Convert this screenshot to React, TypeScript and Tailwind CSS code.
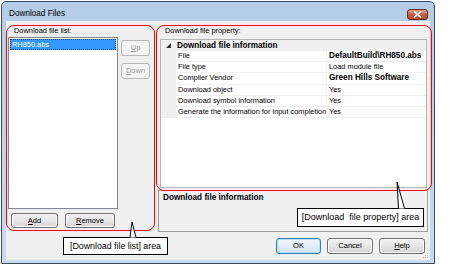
import React from "react";

const rows = [
  { name: "File", value: "DefaultBuild\\RH850.abs", bold: true },
  { name: "File type", value: "Load module file", bold: false },
  { name: "Compiler Vendor", value: "Green Hills Software", bold: true },
  { name: "Download object", value: "Yes", bold: false },
  { name: "Download symbol information", value: "Yes", bold: false },
  { name: "Generate the information for input completion", value: "Yes", bold: false },
];

type BtnProps = {
  children: React.ReactNode;
  className?: string;
  disabled?: boolean;
  primary?: boolean;
};

const Btn = ({ children, className = "", disabled, primary }: BtnProps) => {
  let look =
    "border-[#707070] bg-gradient-to-b from-[#f2f2f2] via-[#e6e6e6] to-[#d4d4d4] text-black shadow-[inset_0_0_0_1px_#fbfbfb]";
  if (disabled) look = "border-[#b6b9bc] bg-[#f4f4f4] text-[#9a9a9a]";
  if (primary)
    look =
      "border-[#3c7fb1] bg-gradient-to-b from-[#eef6fb] via-[#e3eef7] to-[#cfe2f0] text-black shadow-[inset_0_0_0_1px_#aee0fb]";
  return (
    <div
      className={`flex items-center justify-center rounded-[3px] border text-[7.5px] leading-none ${look} ${className}`}
    >
      {children}
    </div>
  );
};

const App = () => {
  return (
    <div className="relative w-[474px] h-[280px] overflow-hidden bg-white font-['Liberation_Sans',Arial,sans-serif] text-black">
      {/* dialog window */}
      <div className="ml-[1px] mt-[1px] w-[434px] h-[263px] flex flex-col rounded-t-[5px] border border-[#3d4d61] bg-gradient-to-b from-[#b4cde8] to-[#c9daee]">
        <div className="h-[19px] flex items-start justify-between pl-[7px] pr-[6px]">
          <span className="pt-[6px] text-[8.2px] leading-[11px]">Download Files</span>
          <div className="mt-[7px] w-[21px] h-[11px] rounded-[3px] border border-[#6b2a1e] bg-gradient-to-b from-[#e6a391] via-[#c7604a] to-[#b34a33] flex items-center justify-center">
            <svg width="9" height="7" viewBox="0 0 9 7">
              <path d="M1 0.5 L8 6.5 M8 0.5 L1 6.5" stroke="#fff" strokeWidth="1.6" />
            </svg>
          </div>
        </div>

        {/* client area */}
        <div className="mx-[4px] h-[239px] bg-[#f0f0f0] flex flex-col pt-[5px] relative">
          <div className="flex h-[206px]">
            {/* left column */}
            <div className="w-[152px] flex flex-col">
              <div className="pl-[8px] h-[10px] text-[7.4px] leading-[10px]">Download file list:</div>
              <div className="flex mt-[1px]">
                <div className="ml-[2px] w-[110px] h-[172px] bg-white border border-[#828790] p-[1px]">
                  <div className="h-[11px] bg-[#3399ff] outline outline-1 outline-dotted outline-[#0b3a6b] -outline-offset-1 text-white text-[7.4px] leading-[11px] pl-[2px]">
                    RH850.abs
                  </div>
                </div>
                <div className="ml-[3px] w-[29px] flex flex-col gap-[7px] pt-[3px]">
                  <Btn disabled className="h-[16px]">
                    <span className="underline">U</span>p
                  </Btn>
                  <Btn disabled className="h-[16px]">
                    <span className="underline">D</span>own
                  </Btn>
                </div>
              </div>
              <div className="flex gap-[7px] ml-[5px] mt-[4px]">
                <Btn className="w-[47px] h-[15px]">
                  <span className="underline">A</span>dd
                </Btn>
                <Btn className="w-[50px] h-[15px]">
                  <span className="underline">R</span>emove
                </Btn>
              </div>
            </div>

            {/* right column */}
            <div className="w-[270px] flex flex-col">
              <div className="pl-[7px] h-[10px] text-[7.4px] leading-[10px]">Download file property:</div>
              <div className="mt-[3px] ml-[2px] w-[267px] h-[150px] bg-white border border-[#b4b4b4] flex flex-col">
                <div className="h-[11px] bg-[#f0f0f0] flex items-center">
                  <svg width="16" height="11" viewBox="0 0 16 11" className="shrink-0">
                    <path d="M10 3 L10 8 L5 8 Z" fill="#333" />
                  </svg>
                  <span className="text-[8.2px] font-bold leading-[11px]">Download file information</span>
                </div>
                {rows.map((r) => (
                  <div key={r.name} className="h-[11.2px] flex">
                    <div className="w-[15px] bg-[#f0f0f0] shrink-0" />
                    <div className="w-[151px] shrink-0 border-b border-r border-[#f0f0f0] pl-[2px] text-[7.4px] leading-[10px] whitespace-nowrap overflow-hidden">
                      {r.name}
                    </div>
                    <div
                      className={`flex-1 border-b border-[#f0f0f0] pl-[2px] whitespace-nowrap overflow-hidden leading-[10px] ${
                        r.bold ? "text-[8.2px] font-bold" : "text-[7.4px]"
                      }`}
                    >
                      {r.value}
                    </div>
                  </div>
                ))}
              </div>
              <div className="mt-[2px] w-[270px] h-[42px] border border-[#a0a0a0] bg-[#f0f0f0] pl-[4px] pt-[2px] text-[8.2px] font-bold leading-[10px]">
                Download file information
              </div>
            </div>
          </div>

          {/* bottom buttons */}
          <div className="flex justify-end gap-[6px] pr-[5px] mt-[6px]">
            <Btn primary className="w-[45px] h-[16px]">OK</Btn>
            <Btn className="w-[46px] h-[16px]">Cancel</Btn>
            <Btn className="w-[46px] h-[16px]">
              <span className="underline">H</span>elp
            </Btn>
          </div>

          {/* resize grip */}
          <svg width="7" height="7" viewBox="0 0 7 7" className="absolute right-[1px] bottom-[1px]">
            <rect x="5" y="1" width="1" height="1" fill="#b8b8b8" />
            <rect x="3" y="3" width="1" height="1" fill="#b8b8b8" />
            <rect x="5" y="3" width="1" height="1" fill="#b8b8b8" />
            <rect x="1" y="5" width="1" height="1" fill="#b8b8b8" />
            <rect x="3" y="5" width="1" height="1" fill="#b8b8b8" />
            <rect x="5" y="5" width="1" height="1" fill="#b8b8b8" />
          </svg>
        </div>
      </div>

      {/* annotation: red outlines */}
      <div className="absolute left-[6px] top-[25px] w-[149px] h-[206px] rounded-[8px] border border-[#ff0000]" />
      <div className="absolute left-[156px] top-[25px] w-[276px] h-[166px] rounded-[8px] border border-[#ff0000]" />

      {/* callout: file list */}
      <div className="absolute left-[63px] top-[237px] w-[105px] h-[18px] bg-white border border-black flex items-center justify-center text-[8.8px] leading-none whitespace-nowrap">
        [Download file list] area
      </div>
      <svg width="12" height="18" viewBox="0 0 12 18" className="absolute left-[126px] top-[221px]">
        <polygon points="6,1 4,16.5 10,16.5" fill="#fff" />
        <polyline points="4,16.5 6,1 10,16.5" fill="none" stroke="#000" strokeWidth="1" />
      </svg>

      {/* callout: file property */}
      <div className="absolute left-[297px] top-[208px] w-[127px] h-[19px] bg-white border border-black flex items-center justify-center text-[9px] leading-none whitespace-nowrap">
        [Download&nbsp; file property] area
      </div>
      <svg width="12" height="28" viewBox="0 0 12 28" className="absolute left-[393px] top-[181px]">
        <polygon points="4,1 5.5,27.5 12,27.5" fill="#fff" />
        <polyline points="5.5,27.5 4,1 11.5,27.5" fill="none" stroke="#000" strokeWidth="1" />
      </svg>
    </div>
  );
};

export default App;
